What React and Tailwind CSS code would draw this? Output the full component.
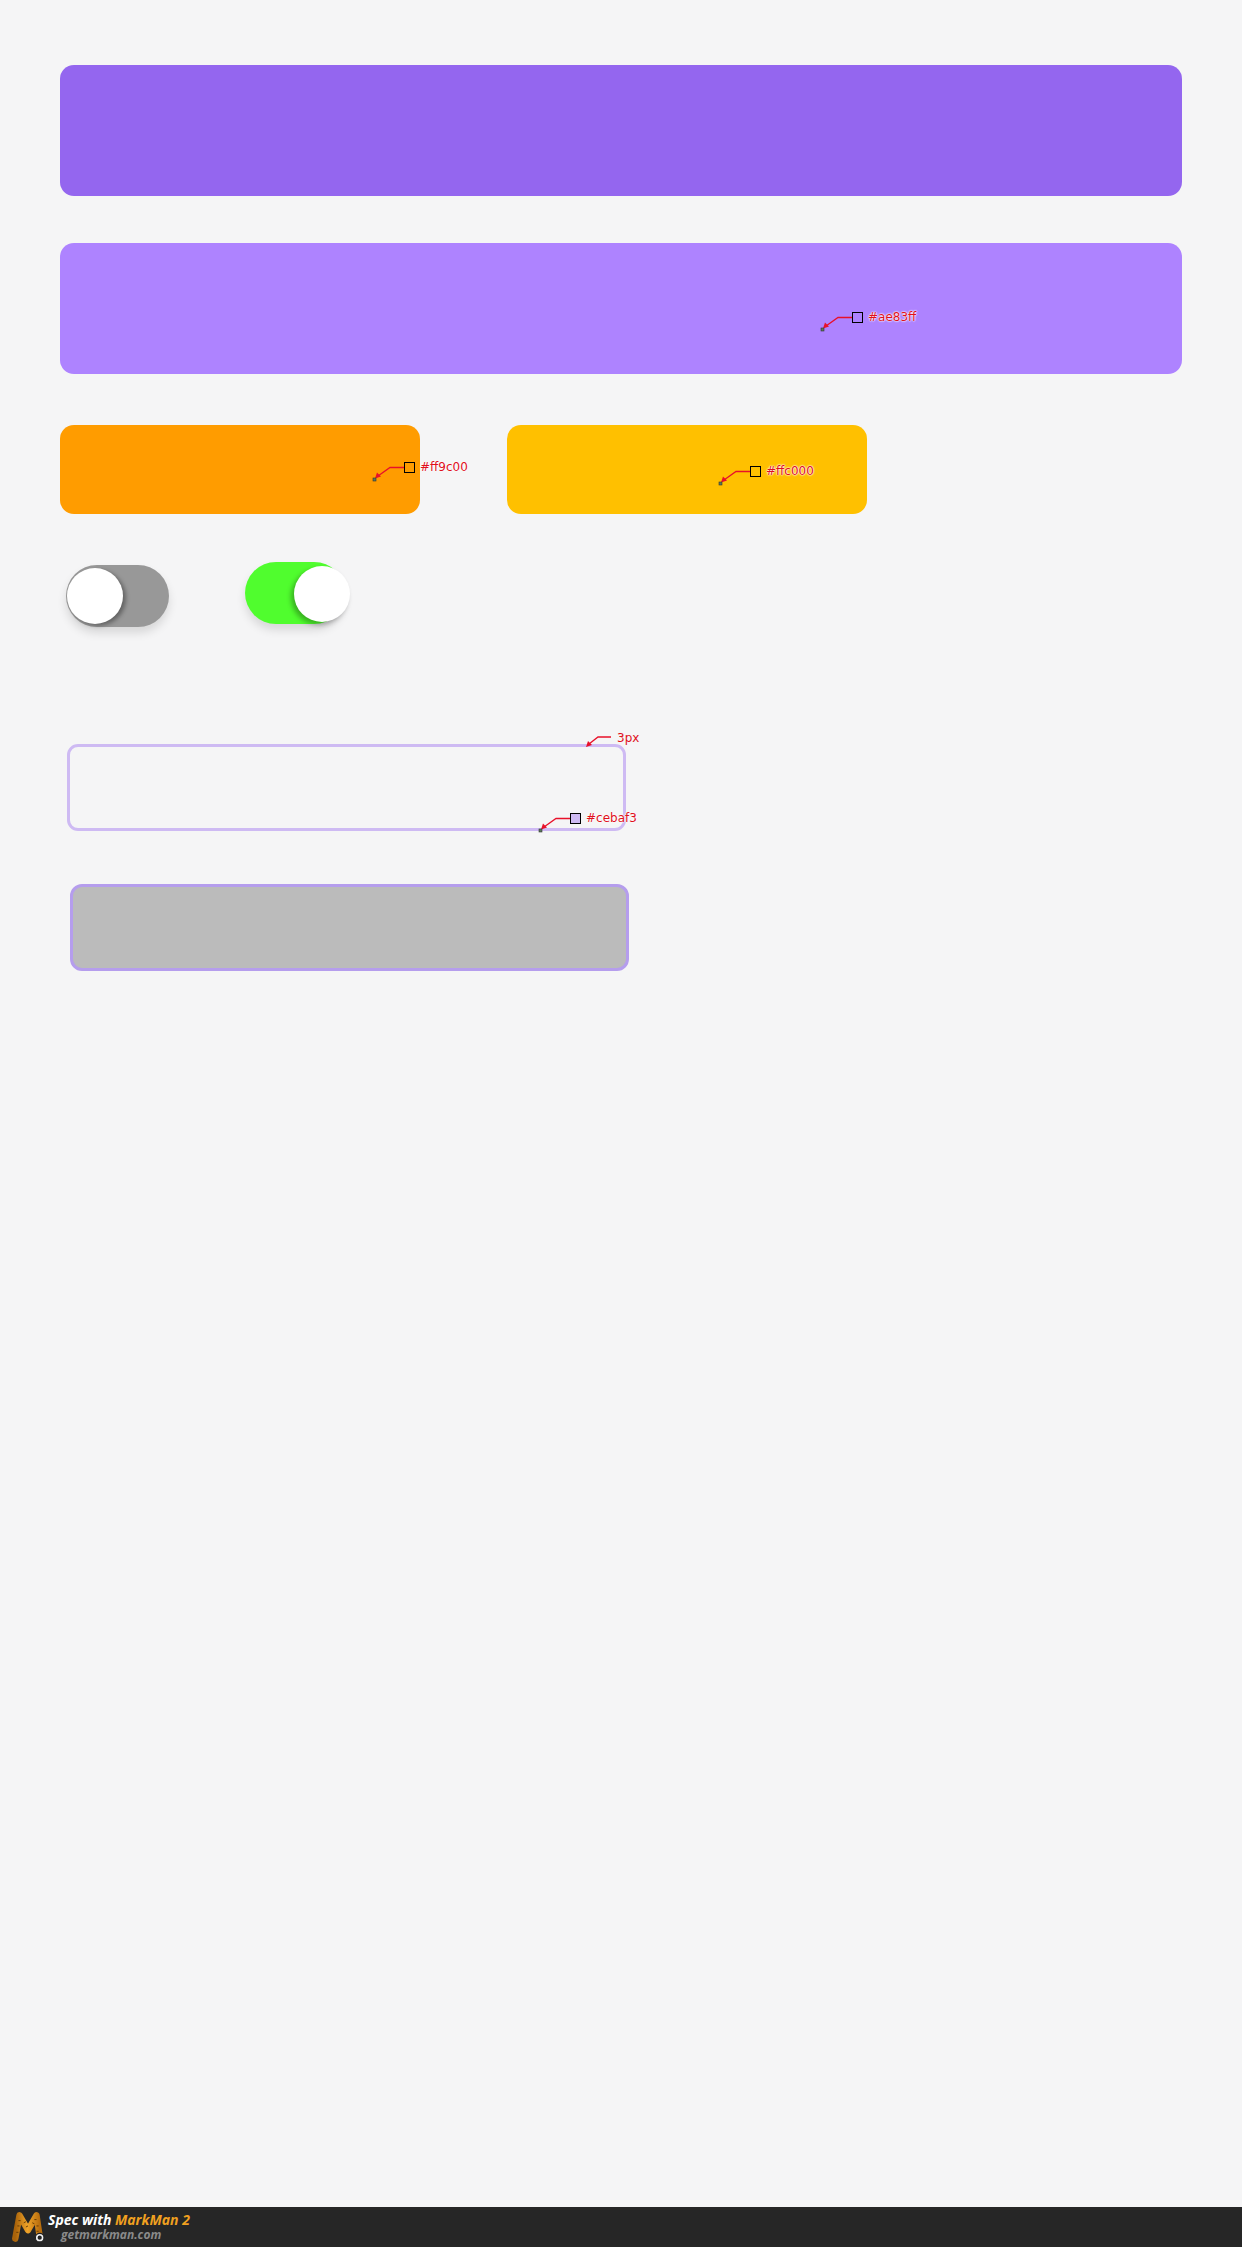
import React from "react";

function Ann({ left, top, fill, label, dotColor = "#5a7a5a" }) {
  return (
    <div className="absolute" style={{ left, top }}>
      <svg className="absolute" style={{ left: -32, top: -2 }} width="34" height="24" viewBox="0 0 34 24">
        <path d="M32 7.5 L18 7.5 L6 16" fill="none" stroke="#e8102a" strokeWidth="1.3" />
        <path d="M3 18.5 L5 12.5 L9 16.5 Z" fill="#e8102a" />
        <rect x="1" y="18" width="3" height="3" fill={dotColor} stroke="#333" strokeWidth="0.6" />
      </svg>
      <div className="w-[11px] h-[11px] border border-black" style={{ backgroundColor: fill }} />
      <div className="absolute left-[16px] top-[-3px] whitespace-nowrap text-[12px] leading-[16px] text-[#e0101c] font-['DejaVu_Sans',sans-serif] [text-shadow:0_0_1px_#fff,0_0_2px_#fff,0_0_2px_#fff]">
        {label}
      </div>
    </div>
  );
}

function Logo() {
  return (
    <svg width="34" height="32" viewBox="0 0 32 30">
      <defs>
        <linearGradient id="lg" x1="0" x2="1">
          <stop offset="0" stopColor="#a8620a" />
          <stop offset="0.5" stopColor="#f0a429" />
          <stop offset="1" stopColor="#b86e0e" />
        </linearGradient>
      </defs>
      <path d="M4 26 L8 4 L16 18 L24 4 L27 24" fill="none" stroke="url(#lg)" strokeWidth="6" strokeLinecap="round" strokeLinejoin="round" />
      <path d="M5 20 L7 20 M6 14 L8 14 M7 9 L9 9 M12 11 L14 10 M14 15 L16 14 M20 11 L22 12 M22 8 L24 8 M24 14 L26 14 M24 19 L26 19" stroke="#5a3200" strokeWidth="0.8" />
      <circle cx="27" cy="25" r="4" fill="#f2f2f2" stroke="#222" strokeWidth="1" />
      <circle cx="27" cy="25" r="2" fill="#222" />
    </svg>
  );
}

export default function App() {
  return (
    <div className="min-h-[2247px] flex flex-col bg-[#f5f5f6]">
      <div className="flex flex-col pl-[60px] pt-[65px]">
        <div className="w-[1122px] h-[131px] rounded-[14px] bg-[#9466ef]" />
        <div className="relative mt-[47px] w-[1122px] h-[131px] rounded-[14px] bg-[#ae83ff]">
          <Ann left={792} top={69} fill="#ae83ff" label="#ae83ff" />
        </div>
        <div className="mt-[51px] flex gap-[87px]">
          <div className="relative w-[360px] h-[89px] rounded-[14px] bg-[#ff9c00]">
            <Ann left={344} top={37} fill="#ff9c00" label="#ff9c00" />
          </div>
          <div className="relative w-[360px] h-[89px] rounded-[14px] bg-[#ffc000]">
            <Ann left={243} top={41} fill="#ffc000" label="#ffc000" />
          </div>
        </div>
        <div className="mt-[48px] flex items-start">
          <div className="relative ml-[6px] mt-[3px] w-[103px] h-[62px] rounded-full bg-[#989898] shadow-[0_6px_10px_rgba(0,0,0,0.12)]">
            <div className="absolute left-[1px] top-[3px] w-[56px] h-[56px] rounded-full bg-white shadow-[3px_2px_4px_rgba(0,0,0,0.35)]" />
          </div>
          <div className="relative ml-[76px] w-[100px] h-[62px] rounded-full bg-[#50fd2e] shadow-[0_6px_10px_rgba(0,0,0,0.12)]">
            <div className="absolute left-[49px] top-[4px] w-[56px] h-[56px] rounded-full bg-white shadow-[-3px_3px_5px_rgba(0,0,0,0.3)]" />
          </div>
        </div>
        <div className="relative mt-[117px] ml-[7px] w-[559px] h-[87px] rounded-[11px] border-[3px] border-[#cebaf3]">
          <Ann left={500} top={66} fill="#cebaf3" label="#cebaf3" />
          <svg className="absolute" style={{ left: 515, top: -14 }} width="30" height="16" viewBox="0 0 30 16">
            <path d="M26 4 L13 4 L4 11" fill="none" stroke="#e8102a" strokeWidth="1.3" />
            <path d="M1 14 L3 8 L7 12 Z" fill="#e8102a" />
          </svg>
          <div className="absolute left-[547px] top-[-17px] text-[12px] leading-[16px] text-[#e0101c] font-['DejaVu_Sans',sans-serif]">
            3px
          </div>
        </div>
        <div className="mt-[53px] ml-[10px] w-[559px] h-[87px] rounded-[12px] border-[3px] border-[#b59ded] bg-[#bbbbbb]" />
      </div>
      <div className="mt-auto h-[40px] bg-[#262626] flex items-center pl-[11px] gap-[3px]">
        <Logo />
        <div className="flex flex-col font-['Open_Sans',sans-serif] italic font-bold leading-none">
          <div className="text-[14px] text-white leading-[16px]">
            Spec with <span className="text-[#f0a020]">MarkMan 2</span>
          </div>
          <div className="text-[12px] text-[#8a8a8a] ml-[13px] leading-[14px]">getmarkman.com</div>
        </div>
      </div>
    </div>
  );
}
